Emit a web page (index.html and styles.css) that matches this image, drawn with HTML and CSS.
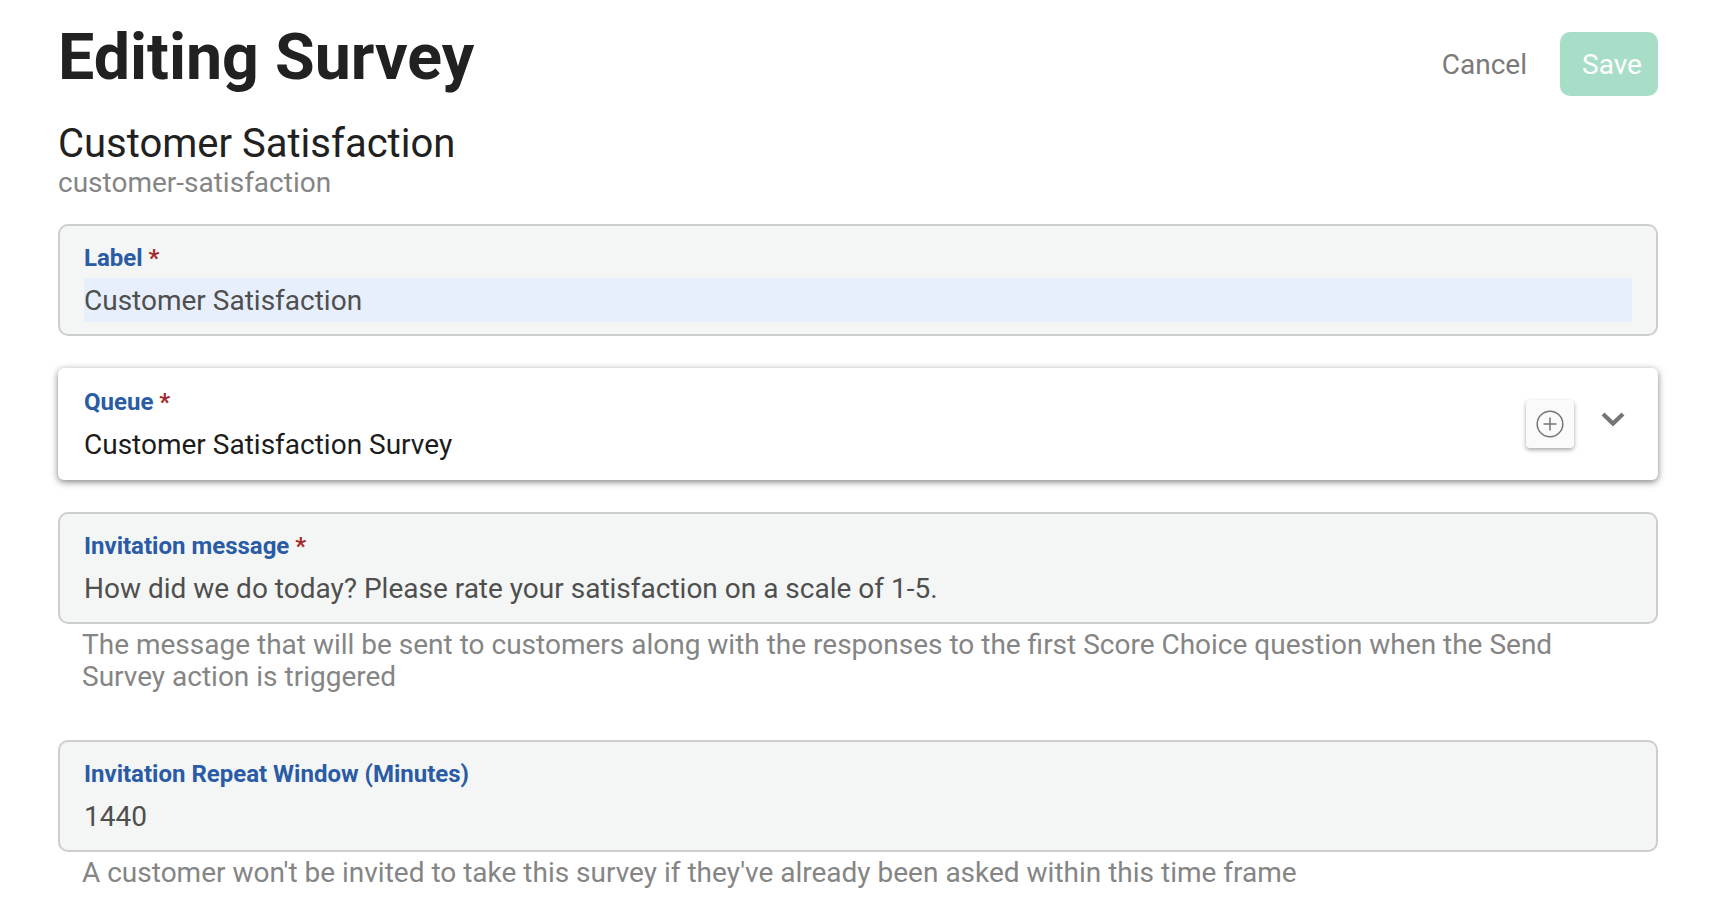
FILE: index.html
```html
<!DOCTYPE html>
<html lang="en">
<head>
  <meta charset="UTF-8" />
  <title>Editing Survey</title>
  <link rel="stylesheet" href="styles.css">
</head>
<body>
  <div class="page">
    <div class="page-header">
      <h1>Editing Survey</h1>
      <div class="actions">
        <button class="btn-cancel">Cancel</button>
        <button class="btn-save">Save</button>
      </div>
    </div>

    <div class="survey-name">Customer Satisfaction</div>
    <div class="survey-slug">customer-satisfaction</div>

    <div class="field field-first">
      <div class="field-label">Label <span class="required">*</span></div>
      <div class="field-value field-autofill">Customer Satisfaction</div>
    </div>

    <div class="field field-select">
      <div class="field-main">
        <div class="field-label">Queue <span class="required">*</span></div>
        <div class="field-value">Customer Satisfaction Survey</div>
      </div>
      <div class="add-btn">
        <svg width="28" height="28" viewBox="0 0 28 28" fill="none" stroke="#757575">
          <circle cx="14" cy="14" r="12.8" stroke-width="1.5"/>
          <path d="M14 7.5v13M7.5 14h13" stroke-width="1.5"/>
        </svg>
      </div>
      <svg class="chevron" width="24" height="16" viewBox="0 0 24 16" fill="none" stroke="#757575" stroke-width="4.2">
        <path d="M2 3l10 9.5L22 3"/>
      </svg>
    </div>

    <div class="field">
      <div class="field-label">Invitation message <span class="required">*</span></div>
      <div class="field-value">How did we do today? Please rate your satisfaction on a scale of 1-5.</div>
    </div>
    <p class="help-text">The message that will be sent to customers along with the responses to the first Score Choice question when the Send Survey action is triggered</p>

    <div class="field field-spaced">
      <div class="field-label">Invitation Repeat Window (Minutes)</div>
      <div class="field-value">1440</div>
    </div>
    <p class="help-text">A customer won't be invited to take this survey if they've already been asked within this time frame</p>
  </div>
</body>
</html>
```

FILE: styles.css
```css
html, body {
  margin: 0;
  height: 100%;
  overflow: hidden;
}

body {
  font-family: Roboto, sans-serif;
  background: #fff;
  color: #212121;
}

.page {
  padding: 0 78px 0 58px;
}

.page-header {
  display: flex;
  justify-content: space-between;
  align-items: flex-start;
  height: 108px;
}

h1 {
  margin: 19px 0 0;
  font-size: 64.5px;
  line-height: 76px;
  font-weight: 700;
  color: #212121;
}

.actions {
  display: flex;
  align-items: center;
  gap: 33px;
  margin-top: 32px;
}

.btn-cancel,
.btn-save {
  border: none;
  background: none;
  padding: 0;
  font-family: inherit;
  font-size: 28px;
}

.btn-cancel {
  color: #7a7a7a;
}

.btn-save {
  width: 98px;
  height: 64px;
  padding-left: 6px;
  background: #a8dec7;
  color: #fff;
  border-radius: 10px;
}

.survey-name {
  font-size: 40px;
  line-height: 50px;
  margin-top: 11px;
}

.survey-slug {
  font-size: 28px;
  line-height: 34px;
  margin-top: -3px;
  color: #858585;
}

.field {
  box-sizing: border-box;
  height: 112px;
  padding: 17px 24px 0;
  margin-top: 32px;
  background: #f4f6f5;
  border: 2px solid #cbcdd1;
  border-radius: 10px;
}

.field-first {
  margin-top: 24px;
}

.field-spaced {
  margin-top: 47px;
}

.field-label {
  font-size: 24px;
  line-height: 30px;
  font-weight: 700;
  color: #2a5ba5;
}

.required {
  color: #a32a2a;
}

.field-value {
  font-size: 28px;
  line-height: 44px;
  margin-top: 6px;
  color: #4f4f4f;
}

.field-autofill {
  margin-top: 5px;
  padding-top: 1px;
  line-height: 43px;
  background: #e8effc;
}

.field-select {
  display: flex;
  align-items: flex-start;
  background: #fff;
  border: none;
  border-radius: 6px;
  padding: 19px 33px 0 26px;
  box-shadow: 0 2px 7px rgba(0, 0, 0, 0.5);
}

.field-select .field-value {
  color: #1c1c1c;
}

.field-main {
  flex: 1;
}

.add-btn {
  display: flex;
  align-items: center;
  justify-content: center;
  width: 48px;
  height: 48px;
  margin-top: 13px;
  background: #fafafa;
  border-radius: 4px;
  box-shadow: 0 2px 4px rgba(0, 0, 0, 0.35);
}

.chevron {
  margin: 24px 0 0 27px;
}

.help-text {
  margin: 5px 60px 0 24px;
  font-size: 28px;
  line-height: 32px;
  color: #858585;
}
```
